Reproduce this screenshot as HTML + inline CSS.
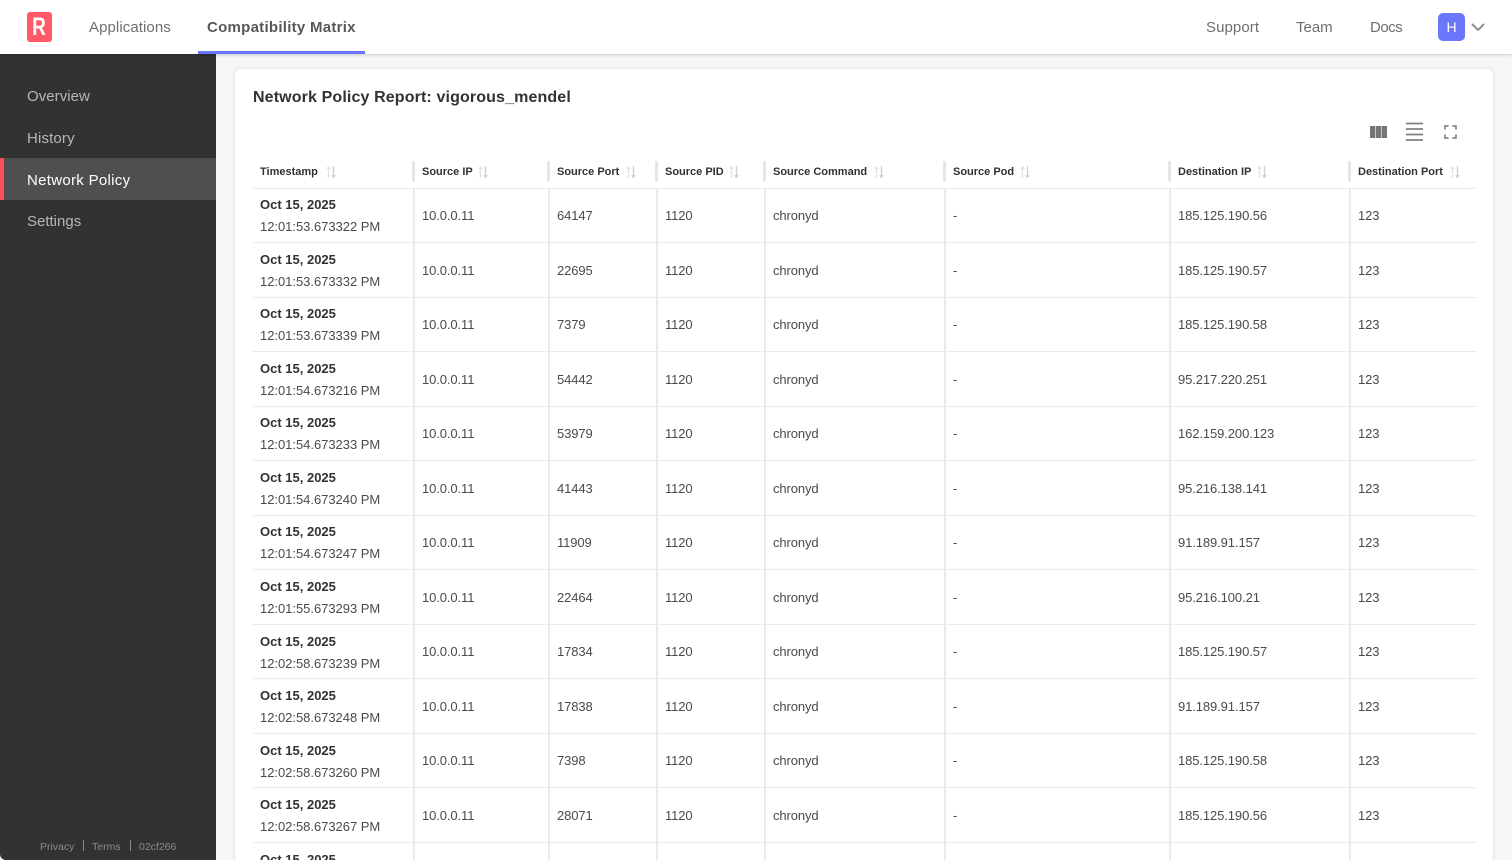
<!DOCTYPE html>
<html><head><meta charset="utf-8"><title>Network Policy Report</title>
<style>
*{box-sizing:border-box}
html,body{margin:0;padding:0;width:1512px;height:860px;overflow:hidden;background:#f5f6f8;font-family:"Liberation Sans",sans-serif;color:#323232}
#w{position:relative;width:1512px;height:860px;overflow:hidden;background:#f5f6f8}
.hdr{position:absolute;left:0;top:0;width:1512px;height:54px;background:#fff;box-shadow:0 1px 3px rgba(0,0,0,.18);z-index:3}
.nav{position:absolute;top:18px;font-size:15px;line-height:20px;color:#6f6f6f;letter-spacing:.08px;white-space:nowrap}
.logo{position:absolute;left:27px;top:12px;width:25px;height:29.5px;background:#ff5a68;border-radius:3px;color:#fff;font-weight:700;font-size:25px;line-height:30px;text-align:center}
.logo span{display:inline-block;transform:scaleX(.76)}
.tab{position:absolute;left:198px;top:51px;width:167px;height:3px;background:#6a77fb}
.av{position:absolute;left:1438px;top:13px;width:27px;height:28px;background:#6a77fb;border-radius:5px;color:#fff;font-size:14px;line-height:28px;text-align:center}
.side{position:absolute;left:0;top:54px;width:216px;height:806px;background:#323232;border-bottom-left-radius:6px;z-index:1}
.si{position:absolute;left:27px;font-size:15px;line-height:20px;color:#b3b8b6;white-space:nowrap}
.act{position:absolute;left:0;top:104px;width:216px;height:42px;background:#4f4f4f;border-left:4.5px solid #f7505a}
.ft{position:absolute;top:786px;font-size:10.5px;line-height:14px;color:#8a8a8a;white-space:nowrap}
.fs{position:absolute;top:786px;width:1px;height:11px;background:#8a8a8a}
.card{position:absolute;left:235px;top:69px;width:1258px;height:830px;background:#fff;border-radius:6px;box-shadow:0 0 3px rgba(0,0,0,.14)}
h1{position:absolute;left:253px;top:87px;margin:0;font-size:16px;line-height:21px;font-weight:700;color:#323232;white-space:nowrap;letter-spacing:.13px}
.row{position:absolute;left:253px;width:1223px;height:1px;background:#ebebeb}
.v{position:absolute;top:188px;width:2px;height:672px;background:#ebebeb}
.hs{position:absolute;top:161px;width:3px;height:21px;background:#e6e6e6;border-radius:1px}
.th{position:absolute;top:165px;font-size:11px;line-height:14px;font-weight:700;color:#323232;white-space:nowrap}
.d{position:absolute;left:260px;margin-top:1px;font-size:13px;line-height:16px;font-weight:700;color:#323232;white-space:nowrap}
.t{position:absolute;left:260px;margin-top:1px;font-size:13px;line-height:16px;color:#4a4a4a;white-space:nowrap;letter-spacing:-.03px}
.c{position:absolute;margin-top:1px;font-size:13px;line-height:16px;color:#4a4a4a;white-space:nowrap;letter-spacing:-.1px}
svg{position:absolute;overflow:visible}
.s{width:10px;height:12px;top:166px}
</style></head><body><div id="w">
<svg width="0" height="0" style="position:absolute"><defs><symbol id="srt" viewBox="0 0 10 12"><path d="M2.500 12V.8M.7 2.800 2.500.8 4.300 2.800" fill="none" stroke="#e2e2e2" stroke-width="1.300"/><path d="M7.500 0v11.200M5.700 9.200 7.500 11.200 9.300 9.200" fill="none" stroke="#d0d0d0" stroke-width="1.300"/></symbol></defs></svg>

<div class="side">
<div class="si" style="top:33px;letter-spacing:.05px">Overview</div>
<div class="si" style="top:75px;letter-spacing:.15px">History</div>
<div class="act"></div>
<div class="si" style="top:117px;color:#fff;letter-spacing:.3px">Network Policy</div>
<div class="si" style="top:158px">Settings</div>
<div class="ft" style="left:40px">Privacy</div><div class="fs" style="left:83px"></div>
<div class="ft" style="left:92px">Terms</div><div class="fs" style="left:130px"></div>
<div class="ft" style="left:139px">02cf266</div>
</div>

<div class="hdr">
<div class="logo"><span>R</span></div>
<div class="nav" style="left:89px">Applications</div>
<div class="nav" style="left:207px;font-weight:700;color:#585858;letter-spacing:.27px">Compatibility Matrix</div>
<div class="tab"></div>
<div class="nav" style="left:1206px">Support</div>
<div class="nav" style="left:1296px;letter-spacing:0">Team</div>
<div class="nav" style="left:1370px;letter-spacing:-.5px">Docs</div>
<div class="av">H</div>
<svg style="left:1471px;top:23px" width="14" height="8" viewBox="0 0 14 8"><path d="M1 1l6 6 6-6" fill="none" stroke="#8f8f8f" stroke-width="2"/></svg>
</div>

<div class="card"></div>
<h1>Network Policy Report: vigorous_mendel</h1>

<svg style="left:1370px;top:126px" width="17" height="12" viewBox="0 0 17 12"><path d="M0 0h5.300v12H0zM5.900 0h5.200v12H5.900zM11.700 0h5.300v12h-5.300z" fill="#757575"/></svg>
<svg style="left:1406px;top:122px" width="17" height="19" viewBox="0 0 17 19"><path d="M0 1.500h17M0 7h17M0 12.500h17M0 18h17" stroke="#808080" stroke-width="1.700" fill="none"/></svg>
<svg style="left:1444px;top:125px" width="13" height="14" viewBox="0 0 13 14"><path d="M1 4.500V1h3.500M8.500 1H12v3.500M12 9.500V13H8.500M4.500 13H1V9.500" fill="none" stroke="#858585" stroke-width="1.700"/></svg>

<div class="th" style="left:260px">Timestamp</div><svg class="s" style="left:326px"><use href="#srt"/></svg>
<div class="hs" style="left:412px"></div><div class="th" style="left:422px">Source IP</div><svg class="s" style="left:478px"><use href="#srt"/></svg>
<div class="hs" style="left:547px"></div><div class="th" style="left:557px">Source Port</div><svg class="s" style="left:626px"><use href="#srt"/></svg>
<div class="hs" style="left:655px"></div><div class="th" style="left:665px">Source PID</div><svg class="s" style="left:729px"><use href="#srt"/></svg>
<div class="hs" style="left:763px"></div><div class="th" style="left:773px">Source Command</div><svg class="s" style="left:874px"><use href="#srt"/></svg>
<div class="hs" style="left:943px"></div><div class="th" style="left:953px">Source Pod</div><svg class="s" style="left:1020px"><use href="#srt"/></svg>
<div class="hs" style="left:1168px"></div><div class="th" style="left:1178px">Destination IP</div><svg class="s" style="left:1257px"><use href="#srt"/></svg>
<div class="hs" style="left:1348px"></div><div class="th" style="left:1358px">Destination Port</div><svg class="s" style="left:1450px"><use href="#srt"/></svg>

<div class="v" style="left:413px"></div><div class="v" style="left:548px"></div><div class="v" style="left:656px"></div><div class="v" style="left:764px"></div><div class="v" style="left:944px"></div><div class="v" style="left:1169px"></div><div class="v" style="left:1349px"></div>

<div class="row" style="top:188px"></div><div class="row" style="top:242px"></div><div class="row" style="top:297px"></div><div class="row" style="top:351px"></div><div class="row" style="top:406px"></div><div class="row" style="top:460px"></div><div class="row" style="top:515px"></div><div class="row" style="top:569px"></div><div class="row" style="top:624px"></div><div class="row" style="top:678px"></div><div class="row" style="top:733px"></div><div class="row" style="top:787px"></div><div class="row" style="top:842px"></div>

<div class="d" style="top:196px">Oct 15, 2025</div><div class="t" style="top:218px">12:01:53.673322 PM</div><div class="c" style="top:207px;left:422px">10.0.0.11</div><div class="c" style="top:207px;left:557px">64147</div><div class="c" style="top:207px;left:665px">1120</div><div class="c" style="top:207px;left:773px">chronyd</div><div class="c" style="top:207px;left:953px">-</div><div class="c" style="top:207px;left:1178px">185.125.190.56</div><div class="c" style="top:207px;left:1358px">123</div>
<div class="d" style="top:251px">Oct 15, 2025</div><div class="t" style="top:273px">12:01:53.673332 PM</div><div class="c" style="top:262px;left:422px">10.0.0.11</div><div class="c" style="top:262px;left:557px">22695</div><div class="c" style="top:262px;left:665px">1120</div><div class="c" style="top:262px;left:773px">chronyd</div><div class="c" style="top:262px;left:953px">-</div><div class="c" style="top:262px;left:1178px">185.125.190.57</div><div class="c" style="top:262px;left:1358px">123</div>
<div class="d" style="top:305px">Oct 15, 2025</div><div class="t" style="top:327px">12:01:53.673339 PM</div><div class="c" style="top:316px;left:422px">10.0.0.11</div><div class="c" style="top:316px;left:557px">7379</div><div class="c" style="top:316px;left:665px">1120</div><div class="c" style="top:316px;left:773px">chronyd</div><div class="c" style="top:316px;left:953px">-</div><div class="c" style="top:316px;left:1178px">185.125.190.58</div><div class="c" style="top:316px;left:1358px">123</div>
<div class="d" style="top:360px">Oct 15, 2025</div><div class="t" style="top:382px">12:01:54.673216 PM</div><div class="c" style="top:371px;left:422px">10.0.0.11</div><div class="c" style="top:371px;left:557px">54442</div><div class="c" style="top:371px;left:665px">1120</div><div class="c" style="top:371px;left:773px">chronyd</div><div class="c" style="top:371px;left:953px">-</div><div class="c" style="top:371px;left:1178px">95.217.220.251</div><div class="c" style="top:371px;left:1358px">123</div>
<div class="d" style="top:414px">Oct 15, 2025</div><div class="t" style="top:436px">12:01:54.673233 PM</div><div class="c" style="top:425px;left:422px">10.0.0.11</div><div class="c" style="top:425px;left:557px">53979</div><div class="c" style="top:425px;left:665px">1120</div><div class="c" style="top:425px;left:773px">chronyd</div><div class="c" style="top:425px;left:953px">-</div><div class="c" style="top:425px;left:1178px">162.159.200.123</div><div class="c" style="top:425px;left:1358px">123</div>
<div class="d" style="top:469px">Oct 15, 2025</div><div class="t" style="top:491px">12:01:54.673240 PM</div><div class="c" style="top:480px;left:422px">10.0.0.11</div><div class="c" style="top:480px;left:557px">41443</div><div class="c" style="top:480px;left:665px">1120</div><div class="c" style="top:480px;left:773px">chronyd</div><div class="c" style="top:480px;left:953px">-</div><div class="c" style="top:480px;left:1178px">95.216.138.141</div><div class="c" style="top:480px;left:1358px">123</div>
<div class="d" style="top:523px">Oct 15, 2025</div><div class="t" style="top:545px">12:01:54.673247 PM</div><div class="c" style="top:534px;left:422px">10.0.0.11</div><div class="c" style="top:534px;left:557px">11909</div><div class="c" style="top:534px;left:665px">1120</div><div class="c" style="top:534px;left:773px">chronyd</div><div class="c" style="top:534px;left:953px">-</div><div class="c" style="top:534px;left:1178px">91.189.91.157</div><div class="c" style="top:534px;left:1358px">123</div>
<div class="d" style="top:578px">Oct 15, 2025</div><div class="t" style="top:600px">12:01:55.673293 PM</div><div class="c" style="top:589px;left:422px">10.0.0.11</div><div class="c" style="top:589px;left:557px">22464</div><div class="c" style="top:589px;left:665px">1120</div><div class="c" style="top:589px;left:773px">chronyd</div><div class="c" style="top:589px;left:953px">-</div><div class="c" style="top:589px;left:1178px">95.216.100.21</div><div class="c" style="top:589px;left:1358px">123</div>
<div class="d" style="top:633px">Oct 15, 2025</div><div class="t" style="top:655px">12:02:58.673239 PM</div><div class="c" style="top:643px;left:422px">10.0.0.11</div><div class="c" style="top:643px;left:557px">17834</div><div class="c" style="top:643px;left:665px">1120</div><div class="c" style="top:643px;left:773px">chronyd</div><div class="c" style="top:643px;left:953px">-</div><div class="c" style="top:643px;left:1178px">185.125.190.57</div><div class="c" style="top:643px;left:1358px">123</div>
<div class="d" style="top:687px">Oct 15, 2025</div><div class="t" style="top:709px">12:02:58.673248 PM</div><div class="c" style="top:698px;left:422px">10.0.0.11</div><div class="c" style="top:698px;left:557px">17838</div><div class="c" style="top:698px;left:665px">1120</div><div class="c" style="top:698px;left:773px">chronyd</div><div class="c" style="top:698px;left:953px">-</div><div class="c" style="top:698px;left:1178px">91.189.91.157</div><div class="c" style="top:698px;left:1358px">123</div>
<div class="d" style="top:742px">Oct 15, 2025</div><div class="t" style="top:764px">12:02:58.673260 PM</div><div class="c" style="top:752px;left:422px">10.0.0.11</div><div class="c" style="top:752px;left:557px">7398</div><div class="c" style="top:752px;left:665px">1120</div><div class="c" style="top:752px;left:773px">chronyd</div><div class="c" style="top:752px;left:953px">-</div><div class="c" style="top:752px;left:1178px">185.125.190.58</div><div class="c" style="top:752px;left:1358px">123</div>
<div class="d" style="top:796px">Oct 15, 2025</div><div class="t" style="top:818px">12:02:58.673267 PM</div><div class="c" style="top:807px;left:422px">10.0.0.11</div><div class="c" style="top:807px;left:557px">28071</div><div class="c" style="top:807px;left:665px">1120</div><div class="c" style="top:807px;left:773px">chronyd</div><div class="c" style="top:807px;left:953px">-</div><div class="c" style="top:807px;left:1178px">185.125.190.56</div><div class="c" style="top:807px;left:1358px">123</div>
<div class="d" style="top:851px">Oct 15, 2025</div>
</div></body></html>
